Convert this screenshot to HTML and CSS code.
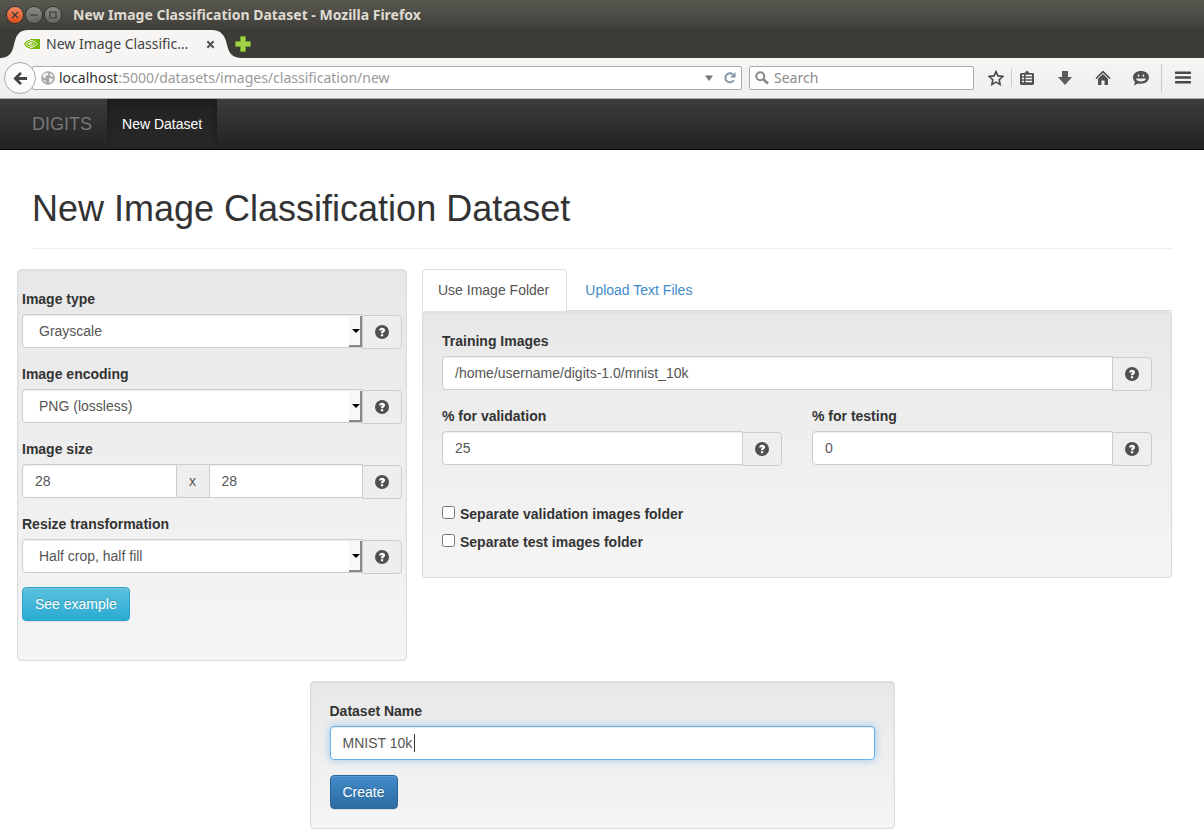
FILE: index.html
```html
<!DOCTYPE html>
<html lang="en">
<head>
<meta charset="utf-8">
<title>New Image Classification Dataset</title>
<link rel="stylesheet" href="styles.css">
</head>
<body>
<svg class="defs" aria-hidden="true">
  <symbol id="help" viewBox="0 0 14 14">
    <circle cx="7" cy="7" r="7" fill="#4f4f4f"/>
    <path d="M4.1 5.600C4.200 3.600 5.400 2.700 7.100 2.700c1.700 0 3 .9 3 2.500 0 1.800-1.900 1.800-1.900 3.100H5.900c0-2 1.500-2.100 1.500-3 0-.4-.2-.6-.5-.6-.4 0-.6.3-.7.900z M5.900 9.300h2.300v2H5.900z" fill="#fff"/>
  </symbol>
</svg>

<header class="browser">
  <div class="titlebar">
    <button class="win win-close" aria-label="Close window"><svg viewBox="0 0 16 16"><path d="M5 5l6 6M11 5l-6 6"/></svg></button>
    <button class="win" aria-label="Minimize"><svg viewBox="0 0 16 16"><path d="M4.500 8h7"/></svg></button>
    <button class="win" aria-label="Maximize"><svg viewBox="0 0 16 16"><path d="M5 5h6v6H5z"/></svg></button>
    <span class="window-title">New Image Classification Dataset - Mozilla Firefox</span>
  </div>
  <div class="tabstrip">
    <div class="tab">
      <svg class="tab-shape" viewBox="0 0 242 28" aria-hidden="true"><path d="M0 28C9 28 12 23 14 15C16 6 18 0 29 0H211C222 0 225 6 227 15C229 23 232 28 242 28z" fill="#f6f5f4"/></svg>
      <svg class="favicon" viewBox="0 0 16 12" aria-hidden="true">
        <path d="M6 1h10v10H6z" fill="#76b900"/>
        <path d="M6 2.500C3.500 2.500 1.500 4 .7 5.700 1.700 8 3.700 9.600 6 9.600M6 4.400C4.500 4.400 3.500 5 3 5.900 3.700 7.200 4.700 7.900 6 7.900" fill="none" stroke="#76b900" stroke-width="1.200"/>
        <path d="M6 2.500c3.500-.2 6 1.500 7.200 3.300C11.500 8 9 9.600 6 9.600M6 4.400c2-.1 3.300.6 4.300 1.600C9.200 7.200 8 7.900 6 7.900M6 5.500c1 0 1.400.3 1.900.9" fill="none" stroke="#fff" stroke-width="1"/>
      </svg>
      <span class="tab-title">New Image Classific…</span>
      <button class="tab-close" aria-label="Close tab"><svg viewBox="0 0 10 10"><path d="M1.500 1.500l7 7M8.500 1.500l-7 7" stroke="#555" stroke-width="2.300"/></svg></button>
    </div>
    <button class="new-tab" aria-label="New tab"><svg viewBox="0 0 16 16"><path d="M5.500.5h5v5h5v5h-5v5h-5v-5h-5v-5h5z" fill="#a4d14a" stroke="#6d9a2a"/></svg></button>
  </div>
  <div class="toolbar">
    <button class="back" aria-label="Back"><svg viewBox="0 0 16 16"><path d="M15 8H4M8.500 2L2.500 8l6 6" fill="none" stroke="#444" stroke-width="3"/></svg></button>
    <div class="urlbar">
      <svg class="icon14" viewBox="0 0 14 14" aria-hidden="true"><circle cx="7" cy="7" r="6.800" fill="#a6a6a6"/><path d="M2 3.500l3-2 2.500.5-.5 2-2 1-.5 2.500L2 6.500zM9 2l3 2v2l-2-.5L8.500 4zM8 7l3.500.5.5 1.500-2.500 3.500-1.500-2zM2 8.500l2.500 1L5 12l-2-1.500z" fill="#eee"/></svg>
      <span class="url"><b>localhost</b>:5000/datasets/images/classification/new</span>
      <svg class="dropmark" viewBox="0 0 8 6" aria-hidden="true"><path d="M0 .5h8L4 6z" fill="#777"/></svg>
      <button class="reload" aria-label="Reload"><svg viewBox="0 0 12 12"><path d="M9.800 8.300A4.600 4.600 0 1 1 8.800 2.200" fill="none" stroke="#8294a5" stroke-width="1.900"/><path d="M11.500 0v5.500H6z" fill="#8294a5"/></svg></button>
    </div>
    <div class="search">
      <svg class="icon14" viewBox="0 0 14 14" aria-hidden="true"><circle cx="5.300" cy="5.300" r="4" fill="none" stroke="#888" stroke-width="2"/><path d="M8.500 8.500l4.500 4" stroke="#888" stroke-width="2.600"/></svg>
      <input class="search-input" type="text" placeholder="Search" aria-label="Search">
    </div>
    <div class="actions">
      <button class="action star" aria-label="Bookmark"><svg viewBox="0 0 16 16"><path d="M8 1.600l2 4.300 4.700.6-3.500 3.200.9 4.700L8 12.100l-4.100 2.300.9-4.700L1.300 6.500 6 5.900z" fill="none" stroke="#484848" stroke-width="1.600"/></svg></button>
      <button class="action list" aria-label="Bookmarks list"><svg viewBox="0 0 16 16"><path d="M2 3h3.500L8 .5 10.500 3H14l1 1v10l-1 1H2l-1-1V4z" fill="#505050"/><path d="M3 5.500h2M6.500 5.500H13M3 8.500h2M6.500 8.500H13M3 11.500h2M6.500 11.500H13" stroke="#fff" stroke-width="1.700"/></svg></button>
      <button class="action" aria-label="Downloads"><svg viewBox="0 0 16 16"><path d="M5 1h6v6h4L8 15 1 7h4z" fill="#5c5c5c"/></svg></button>
      <button class="action" aria-label="Home"><svg viewBox="0 0 16 16"><path d="M1 8.500L8 1.700l7 6.800" fill="none" stroke="#505050" stroke-width="1.700"/><path d="M3 8.700L8 4l5 4.700V15H9.500v-4.500h-3V15H3z" fill="#505050"/></svg></button>
      <button class="action" aria-label="Chat"><svg viewBox="0 0 16 16"><path d="M8 1c4.500 0 8 2.600 8 6.300s-3.500 6.500-8 6.500c-1 0-2-.1-3-.4L1 15.500 2 12C.8 10.900 0 9.300 0 7.300 0 3.600 3.500 1 8 1z" fill="#505050"/><path d="M3 8.500h10c-.5 2.200-2.500 3-5 3s-4.500-.8-5-3z" fill="#eee"/><path d="M4.800 4.500h1.500v2.200H4.800zM9.700 4.500h1.500v2.200H9.700z" fill="#eee"/></svg></button>
      <button class="action menu" aria-label="Menu"><svg viewBox="0 0 16 16"><path d="M1 2.800h14M1 7.500h14M1 12.200h14" stroke="#484848" stroke-width="2.600" stroke-linecap="round"/></svg></button>
    </div>
  </div>
</header>

<nav class="navbar">
  <a class="brand" href="#">DIGITS</a>
  <a class="nav-active" href="#">New Dataset</a>
</nav>

<main class="page">
  <h1 class="page-header">New Image Classification Dataset</h1>
  <form class="form">
    <div class="columns">
      <section class="well well-image">
        <div class="group">
          <label for="type">Image type</label>
          <div class="input-group">
            <div class="select-wrap"><select id="type" class="control"><option>Grayscale</option></select><span class="select-mark"></span></div>
            <button type="button" class="help" aria-label="Help"><svg><use href="#help"/></svg></button>
          </div>
        </div>
        <div class="group">
          <label for="encoding">Image encoding</label>
          <div class="input-group">
            <div class="select-wrap"><select id="encoding" class="control"><option>PNG (lossless)</option></select><span class="select-mark"></span></div>
            <button type="button" class="help" aria-label="Help"><svg><use href="#help"/></svg></button>
          </div>
        </div>
        <div class="group">
          <label for="width">Image size</label>
          <div class="input-group">
            <input id="width" class="control" type="text" value="28">
            <span class="addon">x</span>
            <input class="control control-mid" type="text" value="28" aria-label="Image height">
            <button type="button" class="help" aria-label="Help"><svg><use href="#help"/></svg></button>
          </div>
        </div>
        <div class="group">
          <label for="resize">Resize transformation</label>
          <div class="input-group">
            <div class="select-wrap"><select id="resize" class="control"><option>Half crop, half fill</option></select><span class="select-mark"></span></div>
            <button type="button" class="help" aria-label="Help"><svg><use href="#help"/></svg></button>
          </div>
        </div>
        <button type="button" class="btn btn-info">See example</button>
      </section>

      <section class="source">
        <div class="tabs">
          <a class="tab-link tab-link-active" href="#">Use Image Folder</a>
          <a class="tab-link" href="#">Upload Text Files</a>
        </div>
        <div class="well well-source">
          <div class="group">
            <label for="folder">Training Images</label>
            <div class="input-group">
              <input id="folder" class="control" type="text" value="/home/username/digits-1.0/mnist_10k">
              <button type="button" class="help" aria-label="Help"><svg><use href="#help"/></svg></button>
            </div>
          </div>
          <div class="pair">
            <div class="group">
              <label for="val">% for validation</label>
              <div class="input-group">
                <input id="val" class="control" type="text" value="25">
                <button type="button" class="help" aria-label="Help"><svg><use href="#help"/></svg></button>
              </div>
            </div>
            <div class="group">
              <label for="test">% for testing</label>
              <div class="input-group">
                <input id="test" class="control" type="text" value="0">
                <button type="button" class="help" aria-label="Help"><svg><use href="#help"/></svg></button>
              </div>
            </div>
          </div>
          <div class="checks">
            <label class="check"><input type="checkbox" class="box">Separate validation images folder</label>
            <label class="check"><input type="checkbox" class="box">Separate test images folder</label>
          </div>
        </div>
      </section>
    </div>

    <section class="well well-name">
      <div class="group">
        <label for="name">Dataset Name</label>
        <div class="name-field">
          <input id="name" class="control control-focus" type="text" value="MNIST 10k">
          <span class="caret"></span>
        </div>
      </div>
      <button type="button" class="btn btn-primary">Create</button>
    </section>
  </form>
</main>
</body>
</html>
```
FILE: styles.css
```css
* { box-sizing: border-box; }
body {
  margin: 0;
  background: #fff;
  color: #333;
  font: 14px/20px "Liberation Sans", Arial, sans-serif;
}
button, input, select { font: inherit; color: inherit; margin: 0; }
button { padding: 0; border: 0; background: none; }
a { text-decoration: none; }
svg { display: block; flex: none; }
.defs { position: absolute; width: 0; height: 0; }

/* Browser window */
.browser { font-family: "Noto Sans", sans-serif; background: #3c3b37; }
.titlebar {
  display: flex;
  align-items: center;
  gap: 3px;
  height: 29px;
  padding-left: 7px;
  background: linear-gradient(#595850, #3f3e3a);
}
.win {
  width: 16px;
  height: 16px;
  border-radius: 50%;
  background: linear-gradient(#8b8a83, #65645e);
  box-shadow: 0 0 0 1px #33322e;
}
.win svg { width: 16px; height: 16px; fill: none; stroke: #3c3b37; stroke-width: 1.2; }
.win-close { background: linear-gradient(#f38a63, #de4b1c); }
.window-title { margin-left: 9px; color: #dfdbd2; font-size: 14px; font-weight: bold; }
.tabstrip { display: flex; height: 29px; padding-top: 1px; }
.tab {
  position: relative;
  display: flex;
  align-items: center;
  width: 235px;
  padding-left: 24px;
}
.tab > * { position: relative; }
.tab > .tab-shape { position: absolute; left: 0; top: 0; width: 242px; height: 28px; }
.favicon { width: 16px; height: 12px; }
.tab-title { width: 160px; margin-left: 6px; color: #444; white-space: nowrap; }
.tab-close svg { width: 9px; height: 9px; }
.new-tab svg { width: 16px; height: 16px; }
.toolbar {
  display: flex;
  align-items: center;
  height: 41px;
  padding: 0 13px 0 4px;
  background: linear-gradient(#f6f5f4, #efeeed);
  border-bottom: 1px solid #aaa;
}
.back {
  position: relative;
  z-index: 1;
  display: grid;
  place-items: center;
  flex: none;
  width: 32px;
  height: 32px;
  border: 1px solid #a9a9a9;
  border-radius: 50%;
  background: #fbfbfb;
}
.back svg { width: 15px; height: 15px; }
.urlbar, .search {
  display: flex;
  align-items: center;
  height: 24px;
  border: 1px solid #aaa;
  border-radius: 2px;
  background: #fff;
}
.urlbar { flex: 1; min-width: 0; margin-left: -4px; padding: 0 5px 0 8px; }
.icon14 { width: 14px; height: 14px; }
.url { flex: 1; min-width: 0; margin-left: 4px; overflow: hidden; white-space: nowrap; color: #999; }
.url b { color: #333; font-weight: normal; }
.dropmark { width: 8px; height: 6px; margin-right: 11px; }
.reload svg { width: 12px; height: 12px; }
.search { width: 225px; margin-left: 7px; padding: 0 5px; }
.search-input { flex: 1; min-width: 0; margin-left: 5px; padding: 0; border: 0; background: none; }
.search-input::placeholder { color: #8a8a8a; }
.actions { display: flex; align-items: center; gap: 22px; margin-left: 14px; }
.action svg { width: 16px; height: 16px; }
.star { margin-right: -15px; }
.list { padding: 1px 0 1px 7px; border-left: 1px solid #c5cad0; }
.menu { padding: 6px 0 6px 13px; margin-left: -10px; border-left: 1px solid #c5cad0; }

/* Site navigation */
.navbar {
  display: flex;
  height: 51px;
  padding-left: 17px;
  background: linear-gradient(#3c3c3c, #222);
  border-bottom: 1px solid #080808;
}
.brand { padding: 15px; color: #777; font-size: 18px; }
.nav-active {
  padding: 15px;
  color: #fff;
  background: linear-gradient(#222, #282828);
  box-shadow: inset 0 3px 9px rgba(0, 0, 0, .25);
}

/* Page */
.page { padding: 0 32px; }
.page-header {
  margin: 0 0 20px;
  padding: 39px 0 19px;
  border-bottom: 1px solid #eee;
  font-size: 36px;
  line-height: 40px;
  font-weight: normal;
}
.columns {
  display: grid;
  grid-template-columns: 1fr 2fr;
  align-items: start;
  margin: 0 -15px 20px;
}
.well {
  padding: 19px;
  border: 1px solid #dcdcdc;
  border-radius: 4px;
  background: linear-gradient(#e8e8e8, #f5f5f5);
  box-shadow: inset 0 1px 3px rgba(0, 0, 0, .05), 0 1px 0 rgba(255, 255, 255, .1);
}
.well-image { padding: 19px 4px 39px; }
.source { padding: 0 15px; }
.group { margin-bottom: 15px; }
.well-image .group { margin-bottom: 16px; }
.well-image .group:last-of-type { margin-bottom: 14px; }
label { display: block; margin-bottom: 5px; font-weight: bold; }
.input-group { display: flex; }
.control {
  flex: 1;
  width: 100%;
  min-width: 0;
  height: 34px;
  padding: 6px 12px;
  border: 1px solid #ccc;
  border-radius: 4px;
  background: #fff;
  color: #555;
  box-shadow: inset 0 1px 1px rgba(0, 0, 0, .075);
}
.input-group .control { border-top-right-radius: 0; border-bottom-right-radius: 0; }
.input-group .control-mid { border-radius: 0; }
.select-wrap { position: relative; flex: 1; }
select.control { display: block; padding-left: 16px; appearance: none; }
.select-mark {
  position: absolute;
  right: 1px;
  top: 2px;
  bottom: 1px;
  width: 13px;
  border-right: 2px solid #888;
  border-bottom: 2px solid #888;
  background: #f8f8f6;
  pointer-events: none;
}
.select-mark::before {
  content: "";
  position: absolute;
  left: 3px;
  top: 13px;
  border: 4px solid transparent;
  border-top-color: #000;
  border-bottom: 0;
}
.help {
  display: grid;
  place-items: center;
  flex: none;
  width: 40px;
  height: 34px;
  margin: 1px 0 -1px -1px;
  border: 1px solid #ccc;
  border-radius: 0 4px 4px 0;
  background: #eee;
}
.help svg { width: 14px; height: 14px; }
.addon {
  width: 32px;
  border: solid #ccc;
  border-width: 1px 0;
  background: #eee;
  color: #555;
  line-height: 32px;
  text-align: center;
}
.btn {
  display: block;
  height: 34px;
  padding: 0 12px;
  border: 1px solid;
  border-radius: 4px;
  color: #fff;
  text-shadow: 0 -1px 0 rgba(0, 0, 0, .2);
  box-shadow: inset 0 1px 0 rgba(255, 255, 255, .15), 0 1px 1px rgba(0, 0, 0, .075);
}
.btn-info { background: linear-gradient(#5bc0de, #2aabd2); border-color: #28a4c9; }
.btn-primary { background: linear-gradient(#428bca, #2d6ca2); border-color: #2b669a; }
.tabs { display: flex; gap: 2px; border-bottom: 1px solid #ddd; }
.tab-link {
  padding: 10px 17px 10px 15px;
  border: 1px solid transparent;
  border-bottom: 0;
  color: #428bca;
}
.tab-link-active {
  z-index: 1;
  margin-bottom: -1px;
  border-color: #ddd;
  border-radius: 4px 4px 0 0;
  background: #fff;
  color: #555;
}
.well-source { padding-bottom: 25px; border-top-color: #e4e4e4; }
.well-source .group { margin-bottom: 16px; }
.pair { display: grid; grid-template-columns: 1fr 1fr; gap: 30px; }
.checks { display: grid; gap: 8px; padding-top: 23px; }
.check { display: flex; align-items: flex-start; margin: 0; }
.box { width: 13px; height: 13px; margin: 2px 5px 0 0; }
.well-name { width: 585px; max-width: 100%; margin: 0 auto; }
.name-field { position: relative; display: flex; }
.control-focus {
  border-color: #66afe9;
  outline: 0;
  box-shadow: inset 0 1px 1px rgba(0, 0, 0, .075), 0 0 8px rgba(102, 175, 233, .6);
}
.caret { position: absolute; left: 84px; top: 8px; width: 1px; height: 18px; background: #333; }
```
